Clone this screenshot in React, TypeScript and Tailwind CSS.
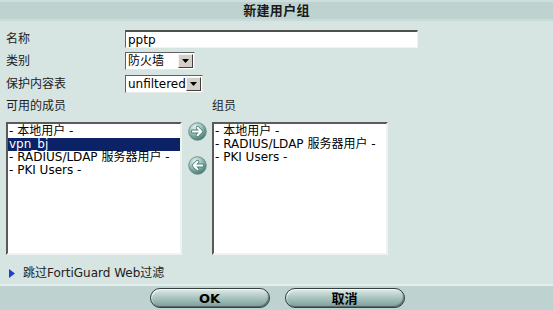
import React from "react";

const FONT = { fontFamily: '"DejaVu Sans", "Noto Sans CJK SC", sans-serif' };

const available = ["- 本地用户 -", "vpn_bj", "- RADIUS/LDAP 服务器用户 -", "- PKI Users -"];
const members = ["- 本地用户 -", "- RADIUS/LDAP 服务器用户 -", "- PKI Users -"];

function DropButton() {
  return (
    <div className="w-[15px] h-[14px] bg-[#d4d0c8] border border-t-[#f4f4f4] border-l-[#f4f4f4] border-b-[#404040] border-r-[#404040] flex items-center justify-center">
      <svg width="7" height="4" viewBox="0 0 7 4">
        <path d="M0 0 H7 L3.5 4 Z" fill="#000" />
      </svg>
    </div>
  );
}

function Select({ value, width }: { value: string; width: string }) {
  return (
    <div
      className={`${width} h-[18px] bg-white border border-t-[#606060] border-l-[#606060] border-b-[#e8e8e8] border-r-[#e8e8e8] flex items-center justify-between pl-[2px] pr-[1px]`}
    >
      <span className="text-[12px] leading-none text-black">{value}</span>
      <DropButton />
    </div>
  );
}

function ListBox({ items, selected }: { items: string[]; selected?: number }) {
  return (
    <div className="w-[176px] h-[133px] bg-white border-2 border-t-[#5a5a5a] border-l-[#5a5a5a] border-b-[#eef2f1] border-r-[#eef2f1] pt-[1px]">
      {items.map((it, i) => (
        <div
          key={i}
          className={`h-[13px] leading-[13px] text-[12px] pl-[1px] whitespace-nowrap ${
            i === selected ? "bg-[#0c2266] text-white" : "text-black"
          }`}
        >
          {it}
        </div>
      ))}
    </div>
  );
}

// round teal arrow buttons between the two lists
function ArrowButton({ dir }: { dir: "right" | "left" }) {
  const id = `g-${dir}`;
  const shape =
    dir === "right" ? "M4.8 9.5 H13 M9.6 5.8 L13.3 9.5 L9.6 13.2" : "M14.2 9.5 H6 M9.4 5.8 L5.7 9.5 L9.4 13.2";
  return (
    <svg width="19" height="19" viewBox="0 0 19 19">
      <defs>
        <radialGradient id={id} cx="38%" cy="28%" r="75%">
          <stop offset="0%" stopColor="#e9f4f2" />
          <stop offset="45%" stopColor="#9ec6bf" />
          <stop offset="100%" stopColor="#3f736b" />
        </radialGradient>
      </defs>
      <circle cx="9.5" cy="9.5" r="8.8" fill={`url(#${id})`} stroke="#6f8f8a" strokeWidth="0.9" />
      <path d={shape} fill="none" stroke="#4f7c75" strokeWidth="3.8" strokeLinecap="round" strokeLinejoin="round" />
      <path d={shape} fill="none" stroke="#ffffff" strokeWidth="2.1" strokeLinecap="round" strokeLinejoin="round" />
    </svg>
  );
}

function PillButton({ label }: { label: string }) {
  return (
    <button className="w-[120px] h-[20px] rounded-full border border-[#34403f] bg-gradient-to-b from-[#dfeae8] via-[#a8c4bf] to-[#7e9f99] shadow-[inset_-1px_-1px_1px_rgba(0,0,0,0.35),inset_1px_1px_1px_rgba(255,255,255,0.7)] text-[13px] font-bold text-black leading-none flex items-center justify-center">
      {label}
    </button>
  );
}

export default function App() {
  return (
    <div className="w-[553px] h-[310px] bg-[#d6e4e2] flex flex-col overflow-hidden" style={FONT}>
      <div className="h-[21px] shrink-0 bg-[#bed3d0] border-t-2 border-t-[#cfdedc] border-b-2 border-b-[#c9dbd8] flex items-center justify-center">
        <span className="text-[13px] font-bold tracking-[0.3px] text-[#1a1a1a]">新建用户组</span>
      </div>

      <div className="flex-1 flex flex-col px-[6px] pt-[9px] text-[12px] text-[#222]">
        <div className="flex items-center h-[18px]">
          <span className="w-[119px]">名称</span>
          <div className="w-[293px] h-[18px] bg-white border border-t-2 border-t-[#505050] border-l-[#606060] border-b-[#f2f2f2] border-r-[#f2f2f2] flex items-center pl-[2px]">
            <span className="text-[12px] leading-none text-black">pptp</span>
          </div>
        </div>
        <div className="flex items-center h-[18px] mt-[4px]">
          <span className="w-[119px]">类别</span>
          <Select value="防火墙" width="w-[70px]" />
        </div>
        <div className="flex items-center h-[18px] mt-[5px]">
          <span className="w-[119px]">保护内容表</span>
          <Select value="unfiltered" width="w-[78px]" />
        </div>

        <div className="flex mt-[6px] h-[14px] items-center">
          <span className="w-[206px]">可用的成员</span>
          <span>组员</span>
        </div>

        <div className="flex mt-[9px]">
          <ListBox items={available} selected={1} />
          <div className="w-[30px] flex flex-col items-center gap-[15px]">
            <ArrowButton dir="right" />
            <ArrowButton dir="left" />
          </div>
          <ListBox items={members} />
        </div>

        <div className="flex items-center mt-[9px] pl-[3px] gap-[8px]">
          <svg width="6" height="9" viewBox="0 0 6 9">
            <path d="M0 0 L6 4.5 L0 9 Z" fill="#1f3fcf" />
          </svg>
          <span className="text-[#222]">跳过FortiGuard Web过滤</span>
        </div>
      </div>

      <div className="h-[26px] shrink-0 bg-[#bed3d0] border-t-2 border-t-[#e6efee] flex items-center justify-center gap-[15px] pl-[1px]">
        <PillButton label="OK" />
        <PillButton label="取消" />
      </div>
    </div>
  );
}
